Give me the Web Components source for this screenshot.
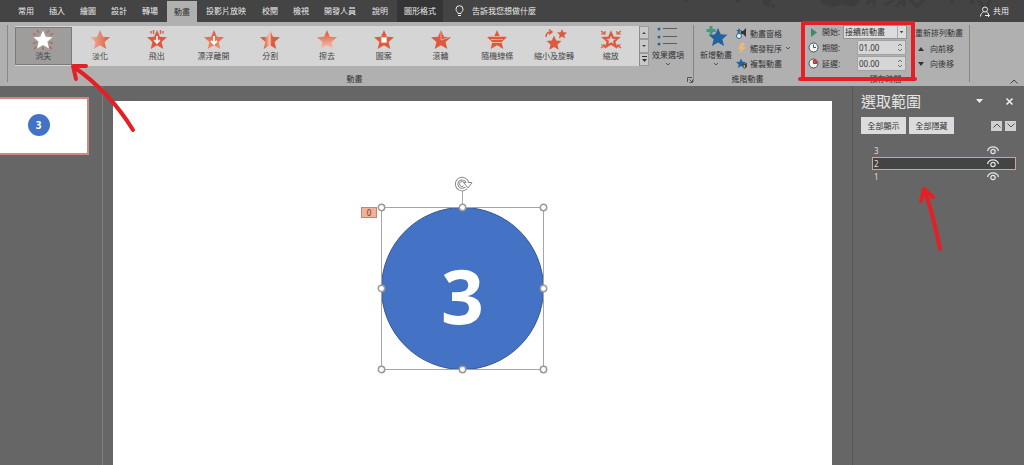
<!DOCTYPE html>
<html lang="zh-Hant">
<head>
<meta charset="utf-8">
<title>簡報編輯器</title>
<style>
html, body { margin: 0; height: 100%; background: #666; }
body { font: 8px/12px "Noto Sans", "Noto Sans CJK TC", sans-serif; color: #333; overflow: hidden; }
</style>
</head>
<body>
<slide-editor></slide-editor>
<script>
const STAR = 'M0 -10 L2.9 -3.3 L10 -2.8 L4.6 1.9 L6.3 9 L0 5.2 L-6.3 9 L-4.6 1.9 L-10 -2.8 L-2.9 -3.3 Z';
const BASE = `*{box-sizing:border-box}
button,select,input{font:inherit;color:inherit;margin:0;padding:0;border:0;border-radius:0;background:none}
svg{display:block;overflow:visible}`;

function define(name, css, render) {
  customElements.define(name, class extends HTMLElement {
    connectedCallback() {
      if (this.shadowRoot) return;
      const t = document.createElement('template');
      t.innerHTML = `<style>${BASE}${css}</style>${render(this)}`;
      this.attachShadow({ mode: 'open' }).append(t.content.cloneNode(true));
    }
  });
}

const star = (fill, s = 1, x = 0, y = 0, extra = '') =>
  `<path transform="translate(${x} ${y}) scale(${s})" d="${STAR}" fill="${fill}" ${extra}/>`;
const RED = '#dd5a3f';
const rays = (c) => `<g stroke="${c}" stroke-width="1.8">
  <path d="M-6 -10l2 3M6 -10l-2 3M-10 -6.500l3 1.500M10 -6.500l-3 1.500M-10 3.500l3.500 -1.300M10 3.500l-3.500 -1.300M-9 9l2.500 -2.500M9 9l-2.500 -2.500M0 7v3"/></g>`;
const ICONS = {
  disappear: rays('#b4715f') + star('#fff', .95),
  fade: `<defs><linearGradient id="g"><stop offset="0" stop-color="#f0b3a4"/><stop offset="1" stop-color="${RED}"/></linearGradient></defs>` + star('url(#g)'),
  fly: star(RED) + `<g stroke="${RED}" stroke-width="1.4"><path d="M-3.500 -10v4M3.500 -10v4M-6 -9v2.500M6 -9v2.500"/></g><path d="M0 -4v6M-2.800 0L0 3L2.800 0" fill="none" stroke="#fff" stroke-width="1.600"/>`,
  float: `<defs><linearGradient id="g" x1="0" y1="1" x2="0" y2="0"><stop offset="0" stop-color="#f08c6b"/><stop offset="1" stop-color="${RED}"/></linearGradient></defs>` + star('url(#g)') + `<path d="M0 -4v7M-3 1L0 4L3 1" fill="none" stroke="#fff" stroke-width="1.800"/>`,
  split: `<defs><linearGradient id="g"><stop offset=".2" stop-color="${RED}"/><stop offset=".5" stop-color="#f7c8bb"/><stop offset=".58" stop-color="${RED}"/></linearGradient></defs>` + star('url(#g)'),
  wipe: `<defs><linearGradient id="g" x1="0" y1="0" x2="0" y2="1"><stop offset=".2" stop-color="#e5664b"/><stop offset="1" stop-color="#f6c6b8"/></linearGradient></defs>` + star('url(#g)'),
  shape: star(RED) + `<path d="M-2.600 -2.600h5.200v5.200h-5.200z" fill="#fff" stroke="#f6c0a8"/>`,
  wheel: star(RED) + `<path d="M0 -10V0L8 -2.800" fill="none" stroke="#f2b5a4" stroke-width=".8"/>`,
  bars: star(RED) + `<path d="M-9 -3.500h18M-6 -.5h12M-5.500 2.500h11" stroke="#efae9c" stroke-width="1"/>`,
  spin: star(RED, .75, 0, 3) + star(RED, .5, 8, -6) + `<path d="M-8 -3c0-4 2-5 5-5M-5 -10.500l3 2.500l-3 2.500" fill="none" stroke="${RED}" stroke-width="1.500"/>`,
  zoom: star('none', .7, 0, 0, `stroke="${RED}" stroke-width="3.200"`) + `<g fill="none" stroke="${RED}" stroke-width="1.200"><path d="M-10 -9l4 3M-6 -9v3h-4M10 -9l-4 3M6 -9v3h4M-10 8l4 -3M-10 5h4v3M10 8l-4 -3M10 5h-4v3"/></g>`
};

define('annotation-arrow', ':host{display:block;position:absolute;pointer-events:none;z-index:5}path{fill:none;stroke:#e42026;stroke-width:4;stroke-linecap:round;stroke-linejoin:round}',
  (e) => `<svg width="${e.getAttribute('w')}" height="${e.getAttribute('h')}" aria-hidden="true"><path d="${e.getAttribute('path')}"/></svg>`);

define('ribbon-tab', `:host{display:flex}
button{padding:0 7px;color:#ececec;white-space:nowrap}
:host([wide]){margin-right:1px}
:host([active]){margin:1px 1px 0}
:host([active]) button{background:#b0b0b0;color:#333}
:host([contextual]){margin-left:1px}
:host([contextual]) button{background:#353535}`, () => '<button role="tab"><slot></slot></button>');

define('ribbon-tabs', `:host{display:flex;height:22px;background:#444;padding-left:11px;gap:1px;position:relative}
.tell{display:flex;align-items:center;gap:8px;padding-left:11px;color:#ececec}
.share{display:flex;align-items:center;gap:3px;margin-left:auto;padding-right:15px;color:#f2f2f2;z-index:1}
.art{position:absolute;right:0;top:0}
ribbon-tab{z-index:1}`,
  () => `<svg class="art" width="364" height="22" viewBox="660 0 364 22" style="overflow:hidden" fill="#3d3d3d" stroke="#3d3d3d" aria-hidden="true">
  <g stroke="none"><circle cx="687" cy="0" r="2"/><circle cx="738" cy="1" r="2"/><circle cx="767" cy="2" r="4"/><circle cx="773" cy="6" r="2"/><path d="M820 0h40q-2 8-12 6l-6-2-8 3q-10 0-14-7z"/><circle cx="972" cy="2" r="2"/><circle cx="952" cy="2" r="2"/></g>
  <path d="M866 4l6-4M874 0v6M884 5l10-5M896 7l6-6M904 0v7M910 0l8 7M924 0l-7 6M978 0l6 7M990 0l-4 8" stroke-width="3" fill="none"/></svg>
<ribbon-tab>常用</ribbon-tab><ribbon-tab>插入</ribbon-tab><ribbon-tab>繪圖</ribbon-tab><ribbon-tab>設計</ribbon-tab><ribbon-tab>轉場</ribbon-tab><ribbon-tab active>動畫</ribbon-tab><ribbon-tab wide>投影片放映</ribbon-tab><ribbon-tab>校閱</ribbon-tab><ribbon-tab>檢視</ribbon-tab><ribbon-tab wide>開發人員</ribbon-tab><ribbon-tab>說明</ribbon-tab><ribbon-tab contextual>圖形格式</ribbon-tab>
<button class="tell"><svg width="9" height="12" fill="none" stroke="#eee"><path d="M3 8.500C3 7 1 6.500 1 4.200a3.500 3.500 0 0 1 7 0C8 6.500 6 7 6 8.500zM3 10.500h3"/></svg>告訴我您想做什麼</button>
<button class="share"><svg width="10" height="11" fill="none" stroke="#eee"><circle cx="5" cy="3.500" r="2.500"/><path d="M.5 10.500C.5 8 2 6.500 3.500 6M6.500 6c1 .5 1.500 1 2 2M5 9.500h4.500M8 8l1.500 1.500L8 11"/></svg>共用</button>`);

define('ribbon-group', `:host{display:flex;flex-direction:column;position:relative;padding-top:4px;height:64px}
.body{flex:1;display:flex;min-height:0}
.label{height:14px;line-height:14px;text-align:center;white-space:nowrap}
:host([divided])::after{content:"";position:absolute;right:0;top:3px;bottom:4px;width:1px;background:#858585}`,
  (e) => `<div class="body"><slot></slot></div><div class="label">${e.getAttribute('label') || ''}</div>`);

define('effect-item', `:host{display:flex;flex:1;min-width:0;position:relative}
button{flex:1;display:flex;flex-direction:column;align-items:center;padding-top:4px;color:#444;white-space:nowrap}
:host([selected]) button{background:#9f9d9b;border:1px solid #7d7b7a;margin:1px 0;height:38px;padding-top:2px}`,
  (e) => `<button><svg width="22" height="20" viewBox="-11 -10 22 20" aria-hidden="true">${ICONS[e.getAttribute('icon')]}</svg><span><slot></slot></span></button><slot name="note"></slot>`);

define('effect-gallery', `:host{display:flex;flex:1;height:40px;background:#d5d5d5}
.scroll{display:flex;flex-direction:column;width:10px;background:#c9c9c9;border-left:1px solid #8d8d8d}
.scroll button{flex:1;border:1px solid #9b9b9b;border-left:0;display:grid;place-items:center}
annotation-arrow{left:54px;top:37px}`,
  () => `<effect-item icon="disappear" selected>消失<annotation-arrow slot="note" w="70" h="70" path="M64 67C50 44 32 23 5 4M17 3L4 3L7 16"></annotation-arrow></effect-item>
<effect-item icon="fade">淡化</effect-item><effect-item icon="fly">飛出</effect-item><effect-item icon="float">漂浮離開</effect-item><effect-item icon="split">分割</effect-item><effect-item icon="wipe">擦去</effect-item><effect-item icon="shape">圖案</effect-item><effect-item icon="wheel">滾輪</effect-item><effect-item icon="bars">隨機線條</effect-item><effect-item icon="spin">縮小及旋轉</effect-item><effect-item icon="zoom">縮放</effect-item>
<div class="scroll"><button aria-label="向上"><svg width="4" height="2"><path d="M0 2L2 0L4 2z" fill="#444"/></svg></button><button aria-label="向下"><svg width="4" height="2"><path d="M0 0L2 2L4 0z" fill="#444"/></svg></button><button aria-label="其他"><svg width="5" height="6"><path d="M0 0h5v1H0zM0 3h5L2.500 6z" fill="#333"/></svg></button></div>`);

define('big-command', `:host{display:flex}
button{display:flex;flex-direction:column;align-items:center;white-space:nowrap;height:42px}
.chev{margin-top:2px}`,
  () => `<button><slot name="icon"></slot><span><slot></slot></span><svg class="chev" width="4" height="3" fill="none" stroke="#555"><path d="M0 0l2 2l2 -2"/></svg></button>`);

define('small-command', `:host{display:flex;height:15px}
button{display:flex;align-items:center;gap:3px;white-space:nowrap}
.chev{display:none;margin-left:1px}:host([menu]) .chev{display:block}`,
  () => `<button><slot name="icon"></slot><span><slot></slot></span><svg class="chev" width="4" height="3" fill="none" stroke="#555"><path d="M0 0l2 2l2 -2"/></svg></button>`);

define('timing-start', `:host{display:contents}
label{white-space:nowrap}
.box{display:flex;grid-column:3;width:64px;height:14px;background:#dcdcdc;border:1px solid #939393;position:relative;justify-self:end}
select{appearance:none;flex:1;padding-left:1px;line-height:12px}
svg.arrow{border-left:1px solid #aaa;width:9px;height:12px;position:absolute;right:0;pointer-events:none}`,
  () => `<svg width="11" height="9"><path d="M3 0L9 4.500L3 9z" fill="#3f8a68"/></svg><label for="s">開始:</label><div class="box"><select id="s"><option>接續前動畫</option></select><svg class="arrow" viewBox="0 0 9 12"><path d="M2 5h4L4 7.500z" fill="#444"/></svg></div>`);

define('timing-field', `:host{display:contents}
label{white-space:nowrap}
.box{display:flex;width:49px;height:15px;background:#d6d6d6;border:1px solid #a2a2a2;justify-self:end;margin-right:1px}
input{flex:1;min-width:0;padding-left:1px;outline:0}
.spin{display:flex;flex-direction:column;width:11px}
.spin button{flex:1;display:grid;place-items:center}`,
  (e) => `<svg width="11" height="11"><circle cx="5.500" cy="5.500" r="4.500" fill="#f3f3f3" stroke="#3f5368"/>${e.hasAttribute('delay') ? '<path d="M5.500 5.500V2A3.500 3.500 0 0 1 9 5.500z" fill="#d44" stroke="#b33"/>' : '<path d="M5.500 2.500v3h2.500" fill="none" stroke="#456"/>'}</svg><label for="f">${e.getAttribute('label')}</label>
<div class="box"><input id="f" value="${e.getAttribute('value')}"><div class="spin"><button aria-label="增加"><svg width="4" height="3" fill="none" stroke="#777"><path d="M0 3l2 -2l2 2"/></svg></button><button aria-label="減少"><svg width="4" height="3" fill="none" stroke="#777"><path d="M0 0l2 2l2 -2"/></svg></button></div></div>`);

define('app-ribbon', `:host{display:flex;background:#b0b0b0;height:64px;position:relative;z-index:2}
.lead{width:8px;border-right:1px solid #888;margin:3px 7px 4px 0}
.effects{flex:1}
.effects big-command{margin-left:3px;padding-right:10px}
.adv big-command{margin-left:6px}
.adv{width:107px}
.col{display:flex;flex-direction:column;margin-left:4px;height:46px}
.launch{position:absolute;right:1px;bottom:3px}
.time{width:169px}
.fields{position:relative;width:114px}
.grid{display:grid;grid-template-columns:11px 18px 1fr;grid-template-rows:14px 15px 15px;gap:1px 3px;align-items:center;padding:0 8px 0 7px;height:46px;margin:-1px 3px 0 0}
.frame{position:absolute;left:0;right:0;top:-5px;height:60px;border:4px solid #e42026;border-radius:2px;z-index:3;pointer-events:none}
.frame::after{content:"";position:absolute;left:-7px;right:-6px;bottom:-4px;height:4px;border-radius:2px;background:#e42026}
.order{display:flex;flex-direction:column;width:55px;height:46px}
.head{height:15px;line-height:13px;white-space:nowrap}
.collapse{width:54px;display:flex;justify-content:flex-end;align-self:flex-end;padding:0 6px 2px 0}
small-command.mv{padding-left:3px}
small-command.mv svg{margin-right:3px}`,
  () => `<div class="lead"></div>
<ribbon-group class="effects" label="動畫" divided><effect-gallery></effect-gallery>
 <big-command><svg slot="icon" width="22" height="23" viewBox="0 0 22 23"><g fill="#2e6697"><circle cx="2" cy="3" r="1.500"/><circle cx="2" cy="11" r="1.500"/><circle cx="2" cy="18" r="1.500"/></g><path d="M6 2.500h14M6 10.500h14M6 17.500h14" stroke="#5c5c5c"/></svg>效果選項</big-command>
 <button class="launch" aria-label="動畫設定"><svg width="6" height="6" fill="none" stroke="#555"><path d="M.5 5V.5H5M2.500 2.500L5 5M5.500 2.500v3h-3"/></svg></button></ribbon-group>
<ribbon-group class="adv" label="進階動畫">
 <big-command><svg slot="icon" width="24" height="23" viewBox="0 0 24 23"><path transform="translate(14 11.500) scale(.95)" d="${STAR}" fill="#21629f"/><path d="M7 0v9M2.500 4.500h9" stroke="#b0b0b0" stroke-width="5"/><path d="M7 0v9M2.500 4.500h9" stroke="#45997a" stroke-width="3"/></svg>新增動畫</big-command>
 <div class="col">
 <small-command><svg slot="icon" width="11" height="11"><path d="M5 3l2 0L10 0v9L7 6H5z" fill="#333"/><path d="M3 0l1 2h2l-2 1.500L5 6L3 4.500L1 6l1 -2.500L0 2h2z" fill="#2e6697"/><circle cx="3" cy="8" r="2.500" fill="#eee" stroke="#2e6697"/></svg>動畫窗格</small-command>
 <small-command menu><svg slot="icon" width="11" height="11"><path d="M5 0h4L7 4h3L3 11l2 -5H2z" fill="#efbb6a"/></svg>觸發程序</small-command>
 <small-command><svg slot="icon" width="11" height="11"><path transform="translate(5 5.500) scale(.5)" d="${STAR}" fill="#21629f"/><path d="M6 6l5 -1v4l-3 2z" fill="#444"/><path d="M7 8l2 -1v3z" fill="#e3b55f"/></svg>複製動畫</small-command></div></ribbon-group>
<ribbon-group class="time" label="預存時間" divided><div class="fields"><div class="grid"><timing-start></timing-start><timing-field label="期間:" value="01.00"></timing-field><timing-field delay label="延遲:" value="00.00"></timing-field></div><div class="frame"></div></div>
 <div class="order"><div class="head">重新排列動畫</div>
 <small-command class="mv"><svg slot="icon" width="6" height="4"><path d="M0 4L3 0L6 4z" fill="#333"/></svg>向前移</small-command>
 <small-command class="mv"><svg slot="icon" width="6" height="4"><path d="M0 0L3 4L6 0z" fill="#333"/></svg>向後移</small-command></div></ribbon-group>
<button class="collapse" aria-label="摺疊功能區"><svg width="8" height="5" fill="none" stroke="#444"><path d="M.5 4.500L4 1l3.500 3.500"/></svg></button>`);

define('slide-thumbnails', `:host{display:block;width:103px;border-right:1px solid #7e7e7e;padding-top:11px}
button{display:grid;place-items:center;width:89px;height:58px;border:2px solid #cf8a80;border-left:0;background:#fff;padding:0 10px 2px 0}
b{display:grid;place-items:center;width:22px;height:22px;border-radius:50%;background:#4472c4;color:#fff;font:bold 10px/22px "Noto Sans",sans-serif}`,
  () => '<button aria-label="投影片 1"><b>3</b></button>');

define('selected-shape', `:host{display:block;position:absolute;left:268px;top:106px;width:163px;height:163px}
.disc{width:163px;height:163px;border-radius:50%;background:#4472c4;border:1px solid #36578f;color:#fff;display:grid;place-items:center;font:bold 75px/88px "Noto Sans",sans-serif;padding-top:12px}
svg{position:absolute;left:0;top:0}
.tag{position:absolute;right:167px;top:0;width:16px;height:11px;border:1px solid #c38674;background:#f3b198;font:8px/9px "Noto Sans",sans-serif;text-align:center;color:#5a3a30}`,
  () => `<div class="disc">3</div><svg width="163" height="163" fill="none" stroke="#a6a6a6" aria-hidden="true"><path d="M.5 .5h162v162H.5zM81.500 0v-17"/>
<g fill="#fff" stroke="#999" stroke-width="1.500">${[[0,0],[81,0],[162,0],[0,81],[162,81],[0,162],[81,162],[162,162]].map(([x, y]) => `<circle cx="${x + .5}" cy="${y + .5}" r="3.200"/>`).join('')}</g>
<g transform="translate(81 -23)"><path d="M4 4A5.500 5.500 0 1 1 5.500 -1" stroke="#8a8a8a" stroke-width="3.600"/><path d="M1.500 -1.500h8.500L6 4z" fill="#fff" stroke="#8a8a8a"/><path d="M4 4A5.500 5.500 0 1 1 5.500 -1" stroke="#fff" stroke-width="1.600"/><path d="M1.500 2A2.500 2.500 0 1 1 2 -1.500" stroke="#8a8a8a"/></g></svg><div class="tag">0</div>`);

define('slide-canvas', `:host{display:flex;flex:1;min-width:0;padding:15px 20px 0 10px}
.slide{flex:1;background:#fff;position:relative}`, () => '<div class="slide"><selected-shape></selected-shape></div>');

define('layer-row', `:host{display:flex;align-items:center;height:13px;padding:0 16px 0 1px;border:1px solid transparent;color:#ddd;font-family:"Noto Sans",sans-serif}
:host([selected]){background:#444;border-color:#c3aaa0}
span{flex:1}`,
  () => `<span><slot></slot></span><button aria-label="顯示或隱藏"><svg width="12" height="9" fill="none" stroke="#e6e6e6" stroke-width="1.200"><path d="M.5 5C2 -.5 10 -.5 11.500 5"/><circle cx="6" cy="5.500" r="2.200"/></svg></button>`);

define('selection-pane', `:host{display:block;width:172px;border-left:1px solid #555;color:#e4e4e4;padding:6px 8px 0;position:relative}
header{display:flex;align-items:center;height:18px}
h2{flex:1;margin:0;font:15px/18px "Noto Sans CJK TC",sans-serif}
.x{margin:0 3px 0 23px}
.bar{display:flex;gap:3px;align-items:center;margin-top:7px}
.bar button{background:#dcdcdc;color:#333;height:17px;width:45px;white-space:nowrap}
.bar .s{width:11px;height:10px;display:grid;place-items:center;background:#d0d0d0}
.bar .first{margin-left:auto}
.list{margin:10px 0 0 11px}
annotation-arrow{left:66px;top:100px}`,
  () => `<header><h2>選取範圍</h2><button aria-label="窗格選項"><svg width="7" height="4"><path d="M0 0h7L3.500 4z" fill="#eee"/></svg></button><button class="x" aria-label="關閉"><svg width="7" height="7" stroke="#eee" stroke-width="1.600"><path d="M.5 .5l6 6M6.500 .5l-6 6"/></svg></button></header>
<div class="bar"><button>全部顯示</button><button>全部隱藏</button><button class="s first" aria-label="上移"><svg width="8" height="5" fill="none" stroke="#555"><path d="M.5 4.500L4 1l3.500 3.500"/></svg></button><button class="s" aria-label="下移"><svg width="8" height="5" fill="none" stroke="#555"><path d="M.5 .5L4 4l3.500 -3.500"/></svg></button></div>
<div class="list"><layer-row>3</layer-row><layer-row selected>2</layer-row><layer-row>1</layer-row></div>
<annotation-arrow w="26" h="70" path="M21 63C17 42 12 22 5 3M2 15L5 3L14 11"></annotation-arrow>`);

define('slide-editor', ':host{display:flex;flex-direction:column;height:100vh;overflow:hidden}main{display:flex;flex:1;min-height:0;background:#666}',
  () => '<ribbon-tabs></ribbon-tabs><app-ribbon></app-ribbon><main><slide-thumbnails></slide-thumbnails><slide-canvas></slide-canvas><selection-pane></selection-pane></main>');
</script>
</body>
</html>
